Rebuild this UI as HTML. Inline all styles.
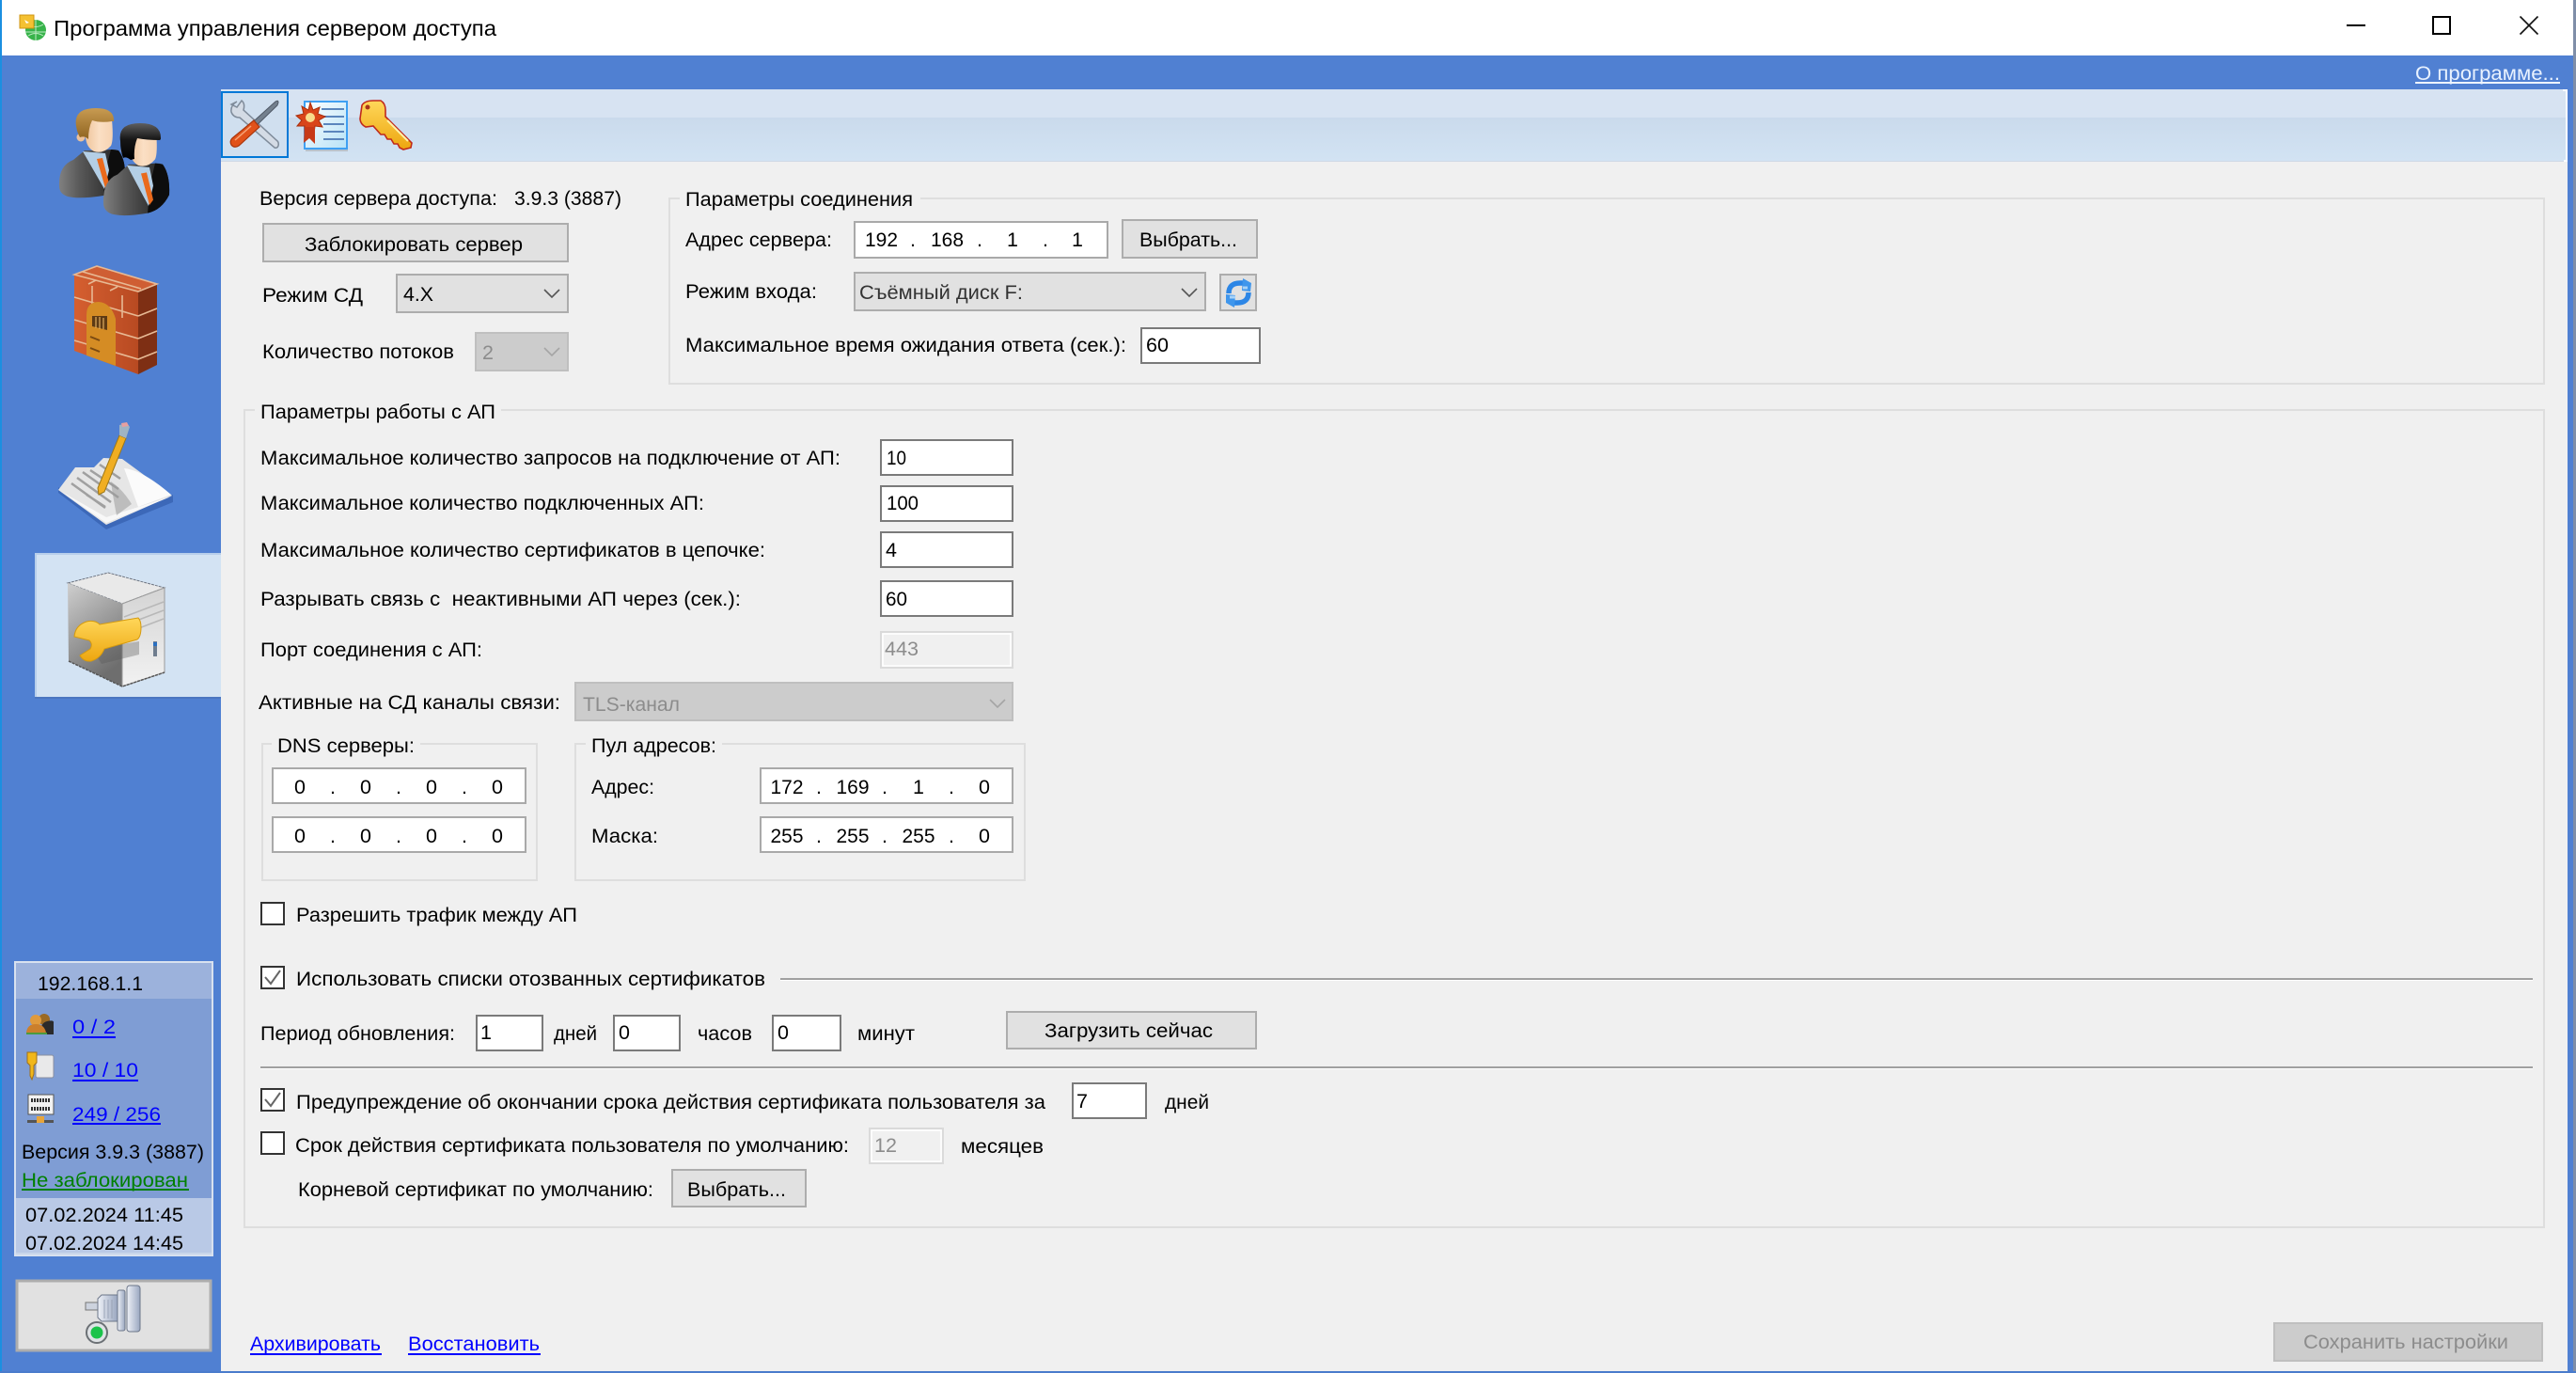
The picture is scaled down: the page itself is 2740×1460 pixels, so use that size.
<!DOCTYPE html>
<html lang="ru"><head><meta charset="utf-8"><title>Программа управления сервером доступа</title>
<style>
html,body{margin:0;padding:0;background:#f0f0f0;overflow:hidden}
svg{display:block}
text{font-family:"Liberation Sans","Noto Sans CJK SC",sans-serif;font-size:21.5px;fill:#000}
.btn{fill:#e1e1e1;stroke:#adadad;stroke-width:2}
.dis{fill:#cccccc;stroke:#bfbfbf;stroke-width:2}
.inp{fill:#fff;stroke:#7a7a7a;stroke-width:2}
.ip{fill:#fff;stroke:#a9a9a9;stroke-width:2}
.dinp{fill:#f0f0f0;stroke:#dadada;stroke-width:2}
.grp{fill:none;stroke:#dedede;stroke-width:2}
.chk{fill:#fff;stroke:#333;stroke-width:2}
.chev{fill:none;stroke:#555;stroke-width:1.6}
.cm{fill:none;stroke:#666;stroke-width:2}
.g{fill:#8c8c8c}
.l{fill:#0000ff}
.m{fill:none;stroke:#e7b994;stroke-width:1.6}
</style></head><body>
<svg width="2740" height="1460" viewBox="0 0 2740 1460" xmlns="http://www.w3.org/2000/svg">
<defs>
<linearGradient id="suit" x1="0" y1="0" x2="1" y2="0"><stop offset="0" stop-color="#808080"/><stop offset=".3" stop-color="#5a5a5a"/><stop offset=".65" stop-color="#3a3a3a"/><stop offset="1" stop-color="#1a1a1a"/></linearGradient>
<linearGradient id="face" x1="0" y1="0" x2="1" y2="0"><stop offset="0" stop-color="#eec39b"/><stop offset=".5" stop-color="#fbdfc4"/><stop offset="1" stop-color="#f6d3b2"/></linearGradient>
<linearGradient id="hb" x1="0" y1="0" x2="0" y2="1"><stop offset="0" stop-color="#c89b52"/><stop offset="1" stop-color="#8f6420"/></linearGradient>
<linearGradient id="hk" x1="0" y1="0" x2="0" y2="1"><stop offset="0" stop-color="#5e5e5e"/><stop offset=".45" stop-color="#161616"/><stop offset="1" stop-color="#000"/></linearGradient>
<linearGradient id="gold" x1="0" y1="0" x2="0" y2="1"><stop offset="0" stop-color="#ffd75a"/><stop offset="1" stop-color="#eda60f"/></linearGradient>
<linearGradient id="srvL" x1="0" y1="0" x2="0.4" y2="1"><stop offset="0" stop-color="#cfcfcf"/><stop offset="1" stop-color="#6e6e6e"/></linearGradient>
<linearGradient id="srvR" x1="0" y1="0" x2="0" y2="1"><stop offset="0" stop-color="#d4d4d4"/><stop offset="1" stop-color="#f2f2f2"/></linearGradient>
<linearGradient id="brick" x1="0" y1="0" x2="1" y2="0"><stop offset="0" stop-color="#d55f30"/><stop offset="1" stop-color="#b84a22"/></linearGradient>
<linearGradient id="tb" x1="0" y1="0" x2="0" y2="1"><stop offset="0" stop-color="#cadaec"/><stop offset="1" stop-color="#d2e3f3"/></linearGradient>
<linearGradient id="doc" x1="0" y1="0" x2="1" y2="1"><stop offset="0" stop-color="#ffffff"/><stop offset="1" stop-color="#b7e3f7"/></linearGradient>
<linearGradient id="plug" x1="0" y1="0" x2="1" y2="0"><stop offset="0" stop-color="#eef1f7"/><stop offset="1" stop-color="#9aa7c0"/></linearGradient>
<g id="person">
<path d="M63 198Q62 176 78 170L90 160h20q10-2 16 0 8 10 7 30-8 15-23 18-25 4-38 1-9-3-9-11z" fill="url(#suit)"/>
<path d="M118 159l8 1q8 10 7 30-8 15-23 18l3-30z" fill="#0d0d0d"/>
<path d="M88 161l24 2 4 18-5 20z" fill="#b4cfe6"/>
<path d="M103 169l6-1 7 27-4 5z" fill="#ea6a1c"/>
<circle cx="86" cy="146" r="4.500" fill="#ecc19a"/>
<path d="M92 128l27-1q2 22-1 28-8 9-18 6-8-4-9-15z" fill="url(#face)"/>
</g>
</defs>

<!-- window frame -->
<rect width="2740" height="1460" fill="#5080d2"/>
<rect x="0" y="0" width="2" height="1460" fill="#1b8fe0"/>
<rect x="2" y="0" width="2735" height="59" fill="#fff"/>
<rect x="2737" y="0" width="3" height="1460" fill="#7f8ea8"/>
<rect x="0" y="1458" width="2740" height="2" fill="#4a7ccc"/>

<!-- title bar -->
<g>
<circle cx="38" cy="32" r="11" fill="#37b34a"/>
<path d="M27 34h22M38 21v22M30 26q8 5 16 0M30 38q8-5 16 0" stroke="#bdeac4" stroke-width="1" fill="none"/>
<rect x="21" y="16" width="15" height="14" fill="#f4c132" stroke="#cf9410"/>
<path d="M26 21l5 3-3 1z" fill="#fff"/>
</g>
<text x="57" y="38" style="font-size:23px" textLength="471" lengthAdjust="spacingAndGlyphs">Программа управления сервером доступа</text>
<path d="M2496 27h20" stroke="#000" stroke-width="2"/>
<rect x="2588" y="18" width="18" height="18" fill="none" stroke="#000" stroke-width="2"/>
<path d="M2680.500 17.500L2699.500 36.500M2699.500 17.500L2680.500 36.500" stroke="#111" stroke-width="1.600"/>

<text x="2569" y="85" style="fill:#e9f2ff;font-size:21px" textLength="154" lengthAdjust="spacingAndGlyphs">О программе...</text>
<rect x="2569" y="87" width="154" height="2" fill="#eef4ff"/>

<!-- content background -->
<rect x="235" y="95" width="2496" height="1363" fill="#f0f0f0"/>
<rect x="235" y="95" width="2494" height="30" fill="#d7e3f2"/>
<rect x="235" y="125" width="2494" height="46" fill="url(#tb)"/>
<rect x="235" y="171" width="2494" height="1" fill="#cfd9e6"/>
<path d="M2726 96h4v75h-3" fill="none" stroke="#fff" stroke-width="2"/>

<!-- toolbar -->
<rect x="236" y="98" width="70" height="69" fill="#d0dfef" stroke="#0078d7" stroke-width="2"/>
<g>
<path d="M252 108q-7 4-6 11 2 6 9 6l37 32q3 1 4-2 1-4-2-6l-35-32q2-7-2-10l-5 7-6-3z" fill="#d4dbe5" stroke="#7f8b9a" stroke-width="1.500"/>
<path d="M262 136l31-28q3-2 3 1l-1 3-29 28z" fill="#74808e" stroke="#4f5866"/>
<path d="M270 128l6 7-22 20q-5 3-8-1-2-4 1-7z" fill="#e1521a" stroke="#a9360d" stroke-width="1.200"/>
<path d="M250 149l17-15" stroke="#f6a377" stroke-width="1.500"/>
</g>
<g>
<rect x="324" y="108" width="45" height="50" fill="url(#doc)" stroke="#3fa0f2" stroke-width="2"/>
<rect x="325" y="159" width="45" height="2" fill="#b8c2cc"/>
<path d="M342 116h24M342 124h24M344 132h22M344 140h22M344 148h22" stroke="#5b86bd" stroke-width="2"/>
<path d="M330 109l3 8 7-3-2 7 8 3-7 4 4 7-8-1-1 8-4-5-6 5 0-8-8 0 5-6-6-5 8-2-2-8 7 4z" fill="#d9451a" stroke="#a82e0c"/>
<circle cx="330" cy="125" r="5" fill="#f8dc8c"/>
<path d="M324 135l-1 17 6-5 6 6 0-18z" fill="#c73a18"/>
</g>
<g>
<path d="M385 112q3-5 12-5h8q5 3 5 10l0 7 28 28-1 5-8 2-4-2-2-4-4 0-3-5-4 0-3-5-4 0-8-9-8 1q-6-3-6-9z" fill="url(#gold)" stroke="#c0291b" stroke-width="1.600"/>
<circle cx="391" cy="114" r="2.500" fill="#a8331a"/>
<path d="M412 128l22 22" stroke="#fff2a8" stroke-width="2"/>
</g>

<!-- sidebar: people -->
<use href="#person"/>
<path d="M81 134q-3-19 21-19 20 0 19 14l-2 0q-12 2-21-1-4 8-4 20-4-4-9-2-3-5-4-12z" fill="url(#hb)"/>
<use href="#person" transform="translate(47,16) scale(1,1.08) translate(0,-13)"/>
<path d="M128 150q-3-19 21-19 23 0 22 17l-1 1q-14 0-24-2-4 10-3 22l-4 1q-5-4-8-2-3-8-3-18z" fill="url(#hk)"/>

<!-- sidebar: firewall -->
<g>
<polygon points="79,292 103,283 167,302 147,310" fill="#cf5e33"/>
<polygon points="79,292 147,310 147,398 79,373" fill="url(#brick)"/>
<polygon points="147,310 167,302 167,388 147,398" fill="#7e2f14"/>
<path class="m" d="M79 292l24-9 64 19-20 8zM79 316l68 20M79 340l68 20M79 362l68 20M147 336l20-8M147 360l20-8M147 382l20-8M88 289l62 18M102 298l-8 4M125 305l-8 4M98 304v22M130 314v24M100 332v20"/>
<path d="M92 335q0-14 13-14 13 1 18 18v50l-31-11z" fill="#d58c24"/>
<path d="M98 336h16v15l-16-4z" fill="#5d3a14"/>
<path d="M102 337v12M106 337v13M110 338v12" stroke="#e0ad60" stroke-width="1.200"/>
<path d="M96 358l10 4M96 370l10 4" stroke="#7a4a12" stroke-width="2"/>
</g>

<!-- sidebar: book -->
<g>
<polygon points="62,524 113,563 184,534 184,526 113,556 62,518" fill="#3c68b8"/>
<polygon points="62,521 80,497 100,497 110,487 130,488 183,527 113,558" fill="#e6e6e6"/>
<polygon points="64,522 113,556 182,528 113,550" fill="#f8f8f8"/>
<path d="M132 498q20 2 50 28l-35 13q-8-22-15-41z" fill="#fbfbfb"/>
<path d="M76 514l36 26M82 508l36 26M88 502l38 27M96 500l30 20M106 494l22 15M92 526l20 13" stroke="#a0a0a0" stroke-width="2.500" fill="none"/>
<path d="M118 512q12 8 22 24l-16 12q-4-20-6-36z" fill="#9a9a9a" opacity=".55"/>
<path d="M127 463l7 3-23 57-6 3-1-7z" fill="#f0ae22" stroke="#9d7717" stroke-width="1"/>
<path d="M127 452l8-2 3 4-4 12-7-3z" fill="#9fb4c4"/>
<path d="M129 450l6-1 2 4-7 1z" fill="#e8a0a0"/>
</g>

<!-- sidebar: selected server -->
<rect x="37" y="588" width="198" height="155" fill="#d3e3f3"/>
<rect x="37" y="588" width="198" height="2" fill="#b8cfeb"/>
<rect x="37" y="588" width="2" height="155" fill="#b8cfeb"/>
<rect x="37" y="741" width="198" height="2" fill="#4b76c0"/>
<g>
<polygon points="72,620 115,609 175,625 130,642" fill="#e9e9e9" stroke="#6d7480" stroke-dasharray="3 1"/>
<polygon points="72,620 130,642 130,730 73,703" fill="url(#srvL)"/>
<polygon points="130,642 175,625 175,715 130,730" fill="url(#srvR)" stroke="#9a9a9a"/>
<path d="M132 656l42-16M132 665l42-16M132 674l42-16" stroke="#b8b8b8" stroke-width="1.500"/>
<path d="M73 703l57 27 45-15" fill="none" stroke="#555" stroke-width="1.500" stroke-dasharray="3 1"/>
<rect x="163" y="682" width="4" height="16" fill="#6f7d8e"/>
<rect x="163" y="683" width="4" height="4" fill="#2a6fc0"/>
<path d="M98 690l50-8v14l-40 10z" fill="#555" opacity=".35"/>
<path d="M79 677q1-12 13-16 9-2 14 3l41-7q3 3 3 10 0 10-4 13l-35 10q-4 10-14 13-8 1-12-6l11-7q3-5-1-9z" fill="url(#gold)" stroke="#d49a10"/>
</g>

<!-- status panel -->
<rect x="16" y="1023" width="210" height="312" fill="#c9d6ea" stroke="#d8e1ef" stroke-width="2"/>
<rect x="17" y="1024" width="208" height="38" fill="#9cb2dc"/>
<rect x="17" y="1062" width="208" height="212" fill="#7f9dd4"/>
<rect x="17" y="1274" width="208" height="58" fill="#b9c9e6"/>
<text x="40" y="1053" textLength="112" lengthAdjust="spacingAndGlyphs">192.168.1.1</text>
<g>
<circle cx="47" cy="1084" r="6" fill="#9b6a23"/>
<path d="M44 1100q-2-12 6-14t7 2v12z" fill="#2b2b2b"/>
<circle cx="38" cy="1085" r="6" fill="#e09a3c"/>
<path d="M28 1098q1-9 10-9t11 9z" fill="#cb7f2c"/><path d="M28 1098h22v2H28z" fill="#4b9b3f"/>
</g>
<text x="77" y="1099" class="l" textLength="46" lengthAdjust="spacingAndGlyphs">0 / 2</text><rect x="77" y="1102" width="46" height="2" fill="#0000ff"/>
<g>
<rect x="38" y="1122" width="19" height="24" rx="2" fill="#e9e9ea" stroke="#8a8fa0"/>
<path d="M29 1119h10v11l-3 3v9l-2 6-2-4v-11l-3-3z" fill="#f1b71a" stroke="#a0701a"/>
</g>
<text x="77" y="1145" class="l" textLength="70" lengthAdjust="spacingAndGlyphs">10 / 10</text><rect x="77" y="1148" width="70" height="2" fill="#0000ff"/>
<g>
<rect x="30" y="1164" width="27" height="21" fill="#f2f2f2" stroke="#555"/>
<path d="M33 1170h21M33 1179h21" stroke="#333" stroke-width="4" stroke-dasharray="2 1"/>
<rect x="29" y="1191" width="28" height="3" fill="#555"/>
<rect x="39" y="1187" width="8" height="7" fill="#e8a53a"/>
</g>
<text x="77" y="1192" class="l" textLength="94" lengthAdjust="spacingAndGlyphs">249 / 256</text><rect x="77" y="1194" width="94" height="2" fill="#0000ff"/>
<text x="23" y="1232" textLength="194" lengthAdjust="spacingAndGlyphs">Версия 3.9.3 (3887)</text>
<text x="23" y="1262" style="fill:#008000" textLength="177" lengthAdjust="spacingAndGlyphs">Не заблокирован</text><rect x="23" y="1264" width="178" height="2" fill="#008000"/>
<text x="27" y="1299" textLength="168" lengthAdjust="spacingAndGlyphs">07.02.2024 11:45</text>
<text x="27" y="1329" textLength="168" lengthAdjust="spacingAndGlyphs">07.02.2024 14:45</text>

<!-- connect button -->
<rect x="18" y="1362" width="206" height="74" class="btn" style="stroke-width:3"/>
<g>
<rect x="91" y="1385" width="13" height="8" fill="#cdd3de" stroke="#777"/>
<path d="M104 1381l4-4h17v28h-17l-4-4z" fill="url(#plug)" stroke="#6c7689"/>
<path d="M111 1382v20M115 1382v20M119 1382v20" stroke="#9aa4b7"/>
<rect x="125" y="1372" width="8" height="43" rx="2" fill="url(#plug)" stroke="#6c7689"/>
<rect x="135" y="1367" width="14" height="49" rx="3" fill="url(#plug)" stroke="#6c7689"/>
<circle cx="103" cy="1417" r="11" fill="#dfe3e6" stroke="#6b7075" stroke-width="2"/>
<circle cx="103" cy="1417" r="6.500" fill="#1bc34a"/>
</g>

<!-- Version column -->
<text x="276" y="218" textLength="253" lengthAdjust="spacingAndGlyphs">Версия сервера доступа:</text>
<text x="547" y="218" textLength="114" lengthAdjust="spacingAndGlyphs">3.9.3 (3887)</text>
<rect x="280" y="238" width="324" height="40" class="btn"/>
<text x="324" y="267" textLength="232" lengthAdjust="spacingAndGlyphs">Заблокировать сервер</text>
<text x="279" y="321" textLength="107" lengthAdjust="spacingAndGlyphs">Режим СД</text>
<rect x="422" y="292" width="182" height="40" class="btn"/>
<text x="429" y="320" textLength="32" lengthAdjust="spacingAndGlyphs">4.X</text>
<polyline class="chev" points="579,308 587,316 595,308"/>
<text x="279" y="381" textLength="204" lengthAdjust="spacingAndGlyphs">Количество потоков</text>
<rect x="506" y="354" width="98" height="40" class="dis"/>
<text x="513" y="382" class="g">2</text>
<polyline class="chev" style="stroke:#a5a5a5" points="579,370 587,378 595,370"/>

<!-- connection group -->
<rect x="712" y="211" width="1994" height="197" class="grp"/>
<rect x="723" y="200" width="256" height="22" fill="#f0f0f0"/>
<text x="729" y="219" textLength="242" lengthAdjust="spacingAndGlyphs">Параметры соединения</text>
<text x="729" y="262" textLength="156" lengthAdjust="spacingAndGlyphs">Адрес сервера:</text>
<rect x="909" y="236" width="269" height="38" class="ip"/>
<text x="920" y="262" textLength="35" lengthAdjust="spacingAndGlyphs">192</text><text x="968" y="262">.</text>
<text x="990" y="262" textLength="35" lengthAdjust="spacingAndGlyphs">168</text><text x="1039" y="262">.</text>
<text x="1071" y="262">1</text><text x="1109" y="262">.</text>
<text x="1140" y="262">1</text>
<rect x="1194" y="234" width="143" height="40" class="btn"/>
<text x="1212" y="262" textLength="104" lengthAdjust="spacingAndGlyphs">Выбрать...</text>
<text x="729" y="317" textLength="140" lengthAdjust="spacingAndGlyphs">Режим входа:</text>
<rect x="909" y="290" width="373" height="40" class="btn"/>
<text x="914" y="318" style="fill:#333" textLength="174" lengthAdjust="spacingAndGlyphs">Съёмный диск F:</text>
<polyline class="chev" points="1257,307 1265,315 1273,307"/>
<rect x="1298" y="292" width="38" height="38" class="btn"/>
<g fill="none" stroke-linecap="butt">
<path d="M1307 312q0-11 12-11h5" stroke="#2c86e6" stroke-width="5.500"/>
<path d="M1328 311q0 11-12 11h-5" stroke="#2c86e6" stroke-width="5.500"/>
</g>
<path d="M1322 296l9 5-1 9-9-1z" fill="#3f96ec"/><path d="M1313 327l-9-5 0-9 10 1z" fill="#3f96ec"/>
<path d="M1308 316l6 0M1322 306l5 0" stroke="#a9d3f7" stroke-width="3"/>
<text x="729" y="374" textLength="469" lengthAdjust="spacingAndGlyphs">Максимальное время ожидания ответа (сек.):</text>
<rect x="1214" y="349" width="126" height="37" class="inp"/>
<text x="1219" y="374" textLength="24" lengthAdjust="spacingAndGlyphs">60</text>

<!-- AP parameters group -->
<rect x="260" y="436" width="2446" height="869" class="grp"/>
<rect x="271" y="426" width="262" height="22" fill="#f0f0f0"/>
<text x="277" y="445" textLength="250" lengthAdjust="spacingAndGlyphs">Параметры работы с АП</text>

<text x="277" y="494" textLength="617" lengthAdjust="spacingAndGlyphs">Максимальное количество запросов на подключение от АП:</text>
<rect x="937" y="468" width="140" height="37" class="inp"/>
<text x="943" y="494" textLength="21" lengthAdjust="spacingAndGlyphs">10</text>
<text x="277" y="542" textLength="472" lengthAdjust="spacingAndGlyphs">Максимальное количество подключенных АП:</text>
<rect x="937" y="517" width="140" height="37" class="inp"/>
<text x="943" y="542" textLength="34" lengthAdjust="spacingAndGlyphs">100</text>
<text x="277" y="592" textLength="537" lengthAdjust="spacingAndGlyphs">Максимальное количество сертификатов в цепочке:</text>
<rect x="937" y="566" width="140" height="37" class="inp"/>
<text x="942" y="592">4</text>
<text x="277" y="644" textLength="511" lengthAdjust="spacingAndGlyphs">Разрывать связь с&#160;&#160;неактивными АП через (сек.):</text>
<rect x="937" y="618" width="140" height="37" class="inp"/>
<text x="942" y="644" textLength="23" lengthAdjust="spacingAndGlyphs">60</text>
<text x="277" y="698" textLength="236" lengthAdjust="spacingAndGlyphs">Порт соединения с АП:</text>
<rect x="937" y="672" width="140" height="38" class="dinp"/>
<rect x="939" y="674" width="136" height="34" fill="none" stroke="#fff" stroke-width="1.500"/>
<text x="941" y="697" class="g" textLength="36" lengthAdjust="spacingAndGlyphs">443</text>
<text x="275" y="754" textLength="321" lengthAdjust="spacingAndGlyphs">Активные на СД каналы связи:</text>
<rect x="612" y="726" width="465" height="40" class="dis"/>
<text x="620" y="756" class="g" textLength="103" lengthAdjust="spacingAndGlyphs">TLS-канал</text>
<polyline class="chev" style="stroke:#a5a5a5" points="1053,744 1061,752 1069,744"/>

<!-- DNS group -->
<rect x="279" y="791" width="292" height="145" class="grp"/>
<rect x="289" y="781" width="158" height="20" fill="#f0f0f0"/>
<text x="295" y="800" textLength="146" lengthAdjust="spacingAndGlyphs">DNS серверы:</text>
<rect x="290" y="817" width="269" height="37" class="ip"/>
<rect x="290" y="869" width="269" height="37" class="ip"/>
<g text-anchor="middle">
<text x="319" y="844">0</text><text x="354" y="844">.</text><text x="389" y="844">0</text><text x="424" y="844">.</text><text x="459" y="844">0</text><text x="494" y="844">.</text><text x="529" y="844">0</text>
<text x="319" y="896">0</text><text x="354" y="896">.</text><text x="389" y="896">0</text><text x="424" y="896">.</text><text x="459" y="896">0</text><text x="494" y="896">.</text><text x="529" y="896">0</text>
</g>

<!-- pool group -->
<rect x="612" y="791" width="478" height="145" class="grp"/>
<rect x="623" y="781" width="145" height="20" fill="#f0f0f0"/>
<text x="629" y="800" textLength="133" lengthAdjust="spacingAndGlyphs">Пул адресов:</text>
<text x="629" y="844" textLength="67" lengthAdjust="spacingAndGlyphs">Адрес:</text>
<text x="629" y="896" textLength="71" lengthAdjust="spacingAndGlyphs">Маска:</text>
<rect x="809" y="817" width="268" height="37" class="ip"/>
<rect x="809" y="869" width="268" height="37" class="ip"/>
<g text-anchor="middle">
<text x="837" y="844" textLength="35" lengthAdjust="spacingAndGlyphs">172</text><text x="871" y="844">.</text><text x="907" y="844" textLength="35" lengthAdjust="spacingAndGlyphs">169</text><text x="941" y="844">.</text><text x="977" y="844">1</text><text x="1012" y="844">.</text><text x="1047" y="844">0</text>
<text x="837" y="896" textLength="35" lengthAdjust="spacingAndGlyphs">255</text><text x="871" y="896">.</text><text x="907" y="896" textLength="35" lengthAdjust="spacingAndGlyphs">255</text><text x="941" y="896">.</text><text x="977" y="896" textLength="35" lengthAdjust="spacingAndGlyphs">255</text><text x="1012" y="896">.</text><text x="1047" y="896">0</text>
</g>

<!-- checkboxes and CRL -->
<rect x="278" y="960" width="24" height="23" class="chk"/>
<text x="315" y="980" textLength="299" lengthAdjust="spacingAndGlyphs">Разрешить трафик между АП</text>

<rect x="278" y="1028" width="24" height="23" class="chk"/>
<polyline class="cm" points="282,1039 288,1046 298,1032"/>
<text x="315" y="1048" textLength="499" lengthAdjust="spacingAndGlyphs">Использовать списки отозванных сертификатов</text>
<rect x="830" y="1040" width="1864" height="2" fill="#a0a0a0"/><rect x="830" y="1042" width="1864" height="1" fill="#fff"/>

<text x="277" y="1106" textLength="207" lengthAdjust="spacingAndGlyphs">Период обновления:</text>
<rect x="507" y="1080" width="70" height="37" class="inp"/>
<text x="511" y="1105">1</text>
<text x="589" y="1106" textLength="46" lengthAdjust="spacingAndGlyphs">дней</text>
<rect x="653" y="1080" width="70" height="37" class="inp"/>
<text x="658" y="1105">0</text>
<text x="742" y="1106" textLength="58" lengthAdjust="spacingAndGlyphs">часов</text>
<rect x="822" y="1080" width="72" height="37" class="inp"/>
<text x="827" y="1105">0</text>
<text x="912" y="1106" textLength="61" lengthAdjust="spacingAndGlyphs">минут</text>
<rect x="1071" y="1076" width="265" height="39" class="btn"/>
<text x="1111" y="1103" textLength="179" lengthAdjust="spacingAndGlyphs">Загрузить сейчас</text>

<rect x="277" y="1134" width="2417" height="2" fill="#a0a0a0"/><rect x="277" y="1136" width="2417" height="1" fill="#fff"/>

<rect x="278" y="1158" width="24" height="23" class="chk"/>
<polyline class="cm" points="282,1169 288,1176 298,1162"/>
<text x="315" y="1179" textLength="797" lengthAdjust="spacingAndGlyphs">Предупреждение об окончании срока действия сертификата пользователя за</text>
<rect x="1141" y="1152" width="78" height="37" class="inp"/>
<text x="1145" y="1178">7</text>
<text x="1239" y="1179" textLength="47" lengthAdjust="spacingAndGlyphs">дней</text>

<rect x="278" y="1204" width="24" height="23" class="chk"/>
<text x="314" y="1225" textLength="589" lengthAdjust="spacingAndGlyphs">Срок действия сертификата пользователя по умолчанию:</text>
<rect x="925" y="1200" width="78" height="37" class="dinp"/>
<rect x="927" y="1202" width="74" height="33" fill="none" stroke="#fff" stroke-width="1.500"/>
<text x="930" y="1225" class="g" textLength="24" lengthAdjust="spacingAndGlyphs">12</text>
<text x="1022" y="1226" textLength="88" lengthAdjust="spacingAndGlyphs">месяцев</text>

<text x="317" y="1272" textLength="378" lengthAdjust="spacingAndGlyphs">Корневой сертификат по умолчанию:</text>
<rect x="715" y="1244" width="142" height="39" class="btn"/>
<text x="731" y="1272" textLength="105" lengthAdjust="spacingAndGlyphs">Выбрать...</text>

<!-- bottom links -->
<text x="266" y="1436" class="l" textLength="139" lengthAdjust="spacingAndGlyphs">Архивировать</text><rect x="266" y="1439" width="140" height="2" fill="#0000ff"/>
<text x="434" y="1436" class="l" textLength="140" lengthAdjust="spacingAndGlyphs">Восстановить</text><rect x="434" y="1439" width="141" height="2" fill="#0000ff"/>
<rect x="2419" y="1407" width="285" height="40" class="dis"/>
<text x="2450" y="1434" class="g" textLength="218" lengthAdjust="spacingAndGlyphs">Сохранить настройки</text>
</svg>
</body></html>
